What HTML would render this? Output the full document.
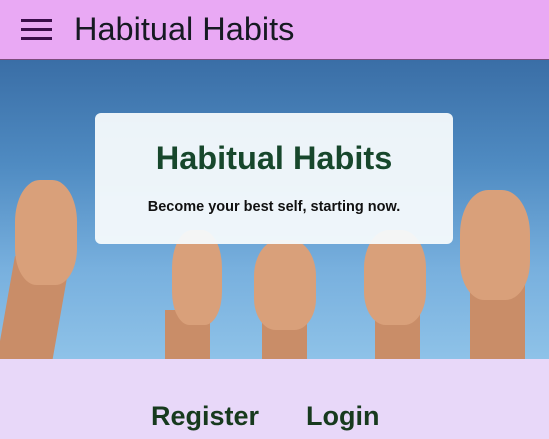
<!DOCTYPE html>
<html><head><style>
*{margin:0;padding:0;box-sizing:border-box}
body{width:549px;height:439px;overflow:hidden;font-family:"Liberation Sans",sans-serif;background:#e8d8f9;position:relative}
.hdr{position:absolute;left:0;top:0;width:549px;height:60px;background:#e9a9f4;border-bottom:1px solid #7b4d7c}
.hb{position:absolute;left:21px;width:31px;height:3px;background:#3a0e4a}
.ttl{position:absolute;left:74px;top:11px;font-size:32.5px;color:#161a22}
.hero{position:absolute;left:0;top:60px;width:549px;height:299px;background:linear-gradient(180deg,#3a6ea6 0%,#4f8bc2 35%,#78b0de 70%,#8ec2e8 100%);overflow:hidden}
.f{position:absolute;background:#d9a07a;border-radius:40% 40% 35% 35%}
.a{position:absolute;background:#c98d68}
.card{position:absolute;left:95px;top:53px;width:358px;height:131px;background:rgba(246,250,252,0.95);border-radius:6px;text-align:center}
.card h1{font-size:32.5px;color:#17472c;margin-top:27px;font-weight:bold}
.card p{font-size:14.5px;font-weight:bold;color:#111;margin-top:22px}
.nav{position:absolute;top:401px;font-size:27px;font-weight:bold;color:#173a1e}
</style></head><body>
<div class="hdr">
<div class="hb" style="top:19px"></div><div class="hb" style="top:28px"></div><div class="hb" style="top:37px"></div>
<div class="ttl">Habitual Habits</div>
</div>
<div class="hero">
<div class="a" style="left:5px;top:200px;width:55px;height:110px;transform:rotate(10deg)"></div>
<div class="f" style="left:15px;top:120px;width:62px;height:105px"></div>
<div class="a" style="left:165px;top:250px;width:45px;height:60px"></div>
<div class="f" style="left:172px;top:170px;width:50px;height:95px"></div>
<div class="a" style="left:262px;top:250px;width:45px;height:60px"></div>
<div class="f" style="left:254px;top:180px;width:62px;height:90px"></div>
<div class="a" style="left:375px;top:250px;width:45px;height:60px"></div>
<div class="f" style="left:364px;top:170px;width:62px;height:95px"></div>
<div class="a" style="left:470px;top:220px;width:55px;height:90px"></div>
<div class="f" style="left:460px;top:130px;width:70px;height:110px"></div>
<div class="card"><h1>Habitual Habits</h1><p>Become your best self, starting now.</p></div>
</div>
<div class="nav" style="left:151px">Register</div>
<div class="nav" style="left:306px">Login</div>
</body></html>
